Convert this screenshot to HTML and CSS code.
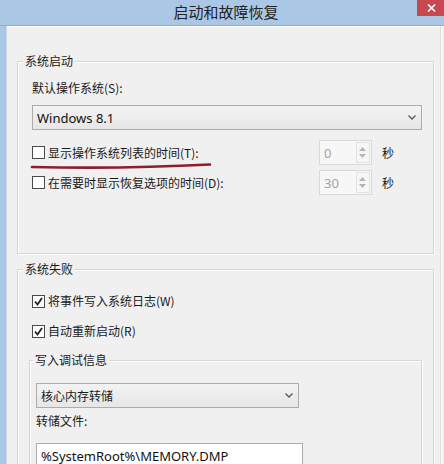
FILE: index.html
```html
<!DOCTYPE html>
<html lang="zh-CN">
<head>
<meta charset="utf-8">
<title>启动和故障恢复</title>
<link rel="stylesheet" href="styles.css">
</head>
<body>
<div class="window">
  <div class="titlebar">
    <span class="title">启动和故障恢复</span>
    <span class="close"><svg width="9" height="8" viewBox="0 0 9 8"><path d="M1 0.5 L8 7.5 M8 0.5 L1 7.5" stroke="#fff" stroke-width="1.6"/></svg></span>
  </div>
  <div class="frame">
    <div class="client">
      <div class="pane">
        <fieldset class="group g1">
          <legend>系统启动</legend>
          <div class="body b1">
            <div class="label">默认操作系统(S):</div>
            <div class="select wide"><span class="latin">Windows 8.1</span><svg class="chev" width="8" height="5" viewBox="0 0 8 5"><path d="M0.5 0.5 L4 4 L7.5 0.5" fill="none" stroke="#555" stroke-width="1.3"/></svg></div>
            <div class="row r1">
              <label class="check"><span class="box"></span><span>显示操作系统列表的时间(T):</span></label>
              <div class="spin"><span class="val">0</span><span class="arrows"><svg width="7" height="4" viewBox="0 0 7 4"><path d="M0 4 L3.5 0 L7 4Z" fill="#b5b5b5"/></svg><svg width="7" height="4" viewBox="0 0 7 4"><path d="M0 0 L3.5 4 L7 0Z" fill="#b5b5b5"/></svg></span></div>
              <span class="unit">秒</span>
              <svg class="mark" width="190" height="10" viewBox="0 0 190 10"><path d="M2 5 Q 95 7 180 2.5" fill="none" stroke="#8a1f2f" stroke-width="2.6" stroke-linecap="round"/></svg>
            </div>
            <div class="row r2">
              <label class="check"><span class="box"></span><span>在需要时显示恢复选项的时间(D):</span></label>
              <div class="spin"><span class="val">30</span><span class="arrows"><svg width="7" height="4" viewBox="0 0 7 4"><path d="M0 4 L3.5 0 L7 4Z" fill="#b5b5b5"/></svg><svg width="7" height="4" viewBox="0 0 7 4"><path d="M0 0 L3.5 4 L7 0Z" fill="#b5b5b5"/></svg></span></div>
              <span class="unit">秒</span>
            </div>
          </div>
        </fieldset>

        <fieldset class="group g2">
          <legend>系统失败</legend>
          <div class="body b2">
            <label class="check crow first"><span class="box checked"><svg width="11" height="11" viewBox="0 0 11 11"><path d="M2 5.5 L4.5 8.5 L9 2" fill="none" stroke="#222" stroke-width="1.8"/></svg></span><span>将事件写入系统日志(W)</span></label>
            <label class="check crow second"><span class="box checked"><svg width="11" height="11" viewBox="0 0 11 11"><path d="M2 5.5 L4.5 8.5 L9 2" fill="none" stroke="#222" stroke-width="1.8"/></svg></span><span>自动重新启动(R)</span></label>
            <fieldset class="group inner">
              <legend>写入调试信息</legend>
              <div class="body b3">
                <div class="select narrow"><span>核心内存转储</span><svg class="chev" width="8" height="5" viewBox="0 0 8 5"><path d="M0.5 0.5 L4 4 L7.5 0.5" fill="none" stroke="#555" stroke-width="1.3"/></svg></div>
                <div class="label dump">转储文件:</div>
                <div class="input"><span class="latin">%SystemRoot%\MEMORY.DMP</span></div>
              </div>
            </fieldset>
          </div>
        </fieldset>
      </div>
    </div>
  </div>
</div>
</body>
</html>
```

FILE: styles.css
```css
* { box-sizing: border-box; }
html, body { margin: 0; padding: 0; }
body {
  width: 444px;
  height: 464px;
  overflow: hidden;
  font-family: "Noto Sans CJK SC", "Noto Sans", sans-serif;
  font-size: 12px;
  color: #1a1a1a;
}
.window {
  width: 444px;
  height: 464px;
  overflow: hidden;
  display: flex;
  flex-direction: column;
  background: #aac8e6;
}
.titlebar {
  height: 26px;
  flex: none;
  display: grid;
  grid-template-columns: 1fr auto 1fr;
  align-items: start;
  padding-left: 8px;
  border-bottom: 1px solid #93adc8;
}
.title {
  grid-column: 2;
  font-size: 15px;
  line-height: 23px;
  color: #222;
}
.close {
  grid-column: 3;
  justify-self: end;
  width: 27px;
  height: 16px;
  background: #c9474f;
  display: flex;
  align-items: center;
  justify-content: center;
  padding-left: 2px;
}
.frame {
  flex: 1;
  display: flex;
  padding-left: 6px;
  min-height: 0;
}
.client {
  flex: 1;
  display: flex;
  background: #f0f0f0;
  border-left: 1px solid #c8d6e4;
  box-shadow: inset 0 1px 0 #fff;
  padding-right: 3px;
}
.pane {
  flex: 1;
  padding: 27px 6px 0 10px;
  border-right: 1px solid #dcdcdc;
  box-shadow: 1px 0 0 #fff;
}
.group {
  margin: 0;
  padding: 0;
  min-width: 0;
  border: 1px solid #d6d6d6;
  box-shadow: inset 1px 1px 0 #fff, 1px 1px 0 #fff;
}
.group legend {
  margin-left: 5px;
  padding: 0 2px;
  line-height: 16px;
  background: #f0f0f0;
}
.g1 { height: 201px; }
.g2 { margin-top: 7px; height: 230px; }
.inner { margin-top: 11px; margin-right: 0; height: 140px; }
.inner legend { margin-left: 3px; }

.b1 { padding: 11px 11px 0 14px; }
.label { line-height: 16px; }
.select {
  height: 25px;
  border: 1px solid #acacac;
  background: linear-gradient(#f3f3f3, #e6e6e6);
  display: flex;
  align-items: center;
  justify-content: space-between;
  padding: 0 5px 0 4px;
}
.select.wide { margin-top: 9px; }
.latin { font-family: "Noto Sans", sans-serif; font-size: 13px; color: #111; }
.row {
  position: relative;
  display: flex;
  align-items: center;
  height: 25px;
}
.r1 { margin-top: 10px; }
.r2 { margin-top: 5px; }
.check {
  display: flex;
  align-items: center;
  line-height: 16px;
}
.row .check { flex: 1; }
.box {
  width: 13px;
  height: 13px;
  border: 1px solid #4a4a4a;
  background: #fff;
  margin-right: 3px;
  display: flex;
  align-items: center;
  justify-content: center;
  flex: none;
}
.spin {
  width: 53px;
  height: 25px;
  border: 1px solid #d9d9d9;
  background: #f7f7f7;
  display: flex;
  align-items: center;
  justify-content: space-between;
  padding: 1px 1px 1px 4px;
}
.val { font-family: "Noto Sans", sans-serif; font-size: 13px; color: #a3a3a3; }
.arrows {
  width: 14px;
  height: 100%;
  border: 1px solid #e2e2e2;
  display: flex;
  flex-direction: column;
  align-items: center;
  justify-content: space-around;
  padding: 3px 0;
}
.arrows svg { display: block; }
.unit { margin: 0 28px 0 10px; line-height: 16px; }
.mark {
  position: absolute;
  left: -2px;
  top: 22px;
}

.b2 { padding: 14px 11px 0 11px; }
.crow { margin-left: 3px; height: 20px; }
.crow.second { margin-top: 10px; }
.b3 { padding: 15px 0 0 6px; }
.select.narrow { width: 263px; }
.label.dump { margin-top: 5px; }
.input {
  margin-top: 14px;
  width: 267px;
  height: 25px;
  border: 1px solid #abadb3;
  background: #fff;
  display: flex;
  align-items: center;
  padding-left: 4px;
}
```
